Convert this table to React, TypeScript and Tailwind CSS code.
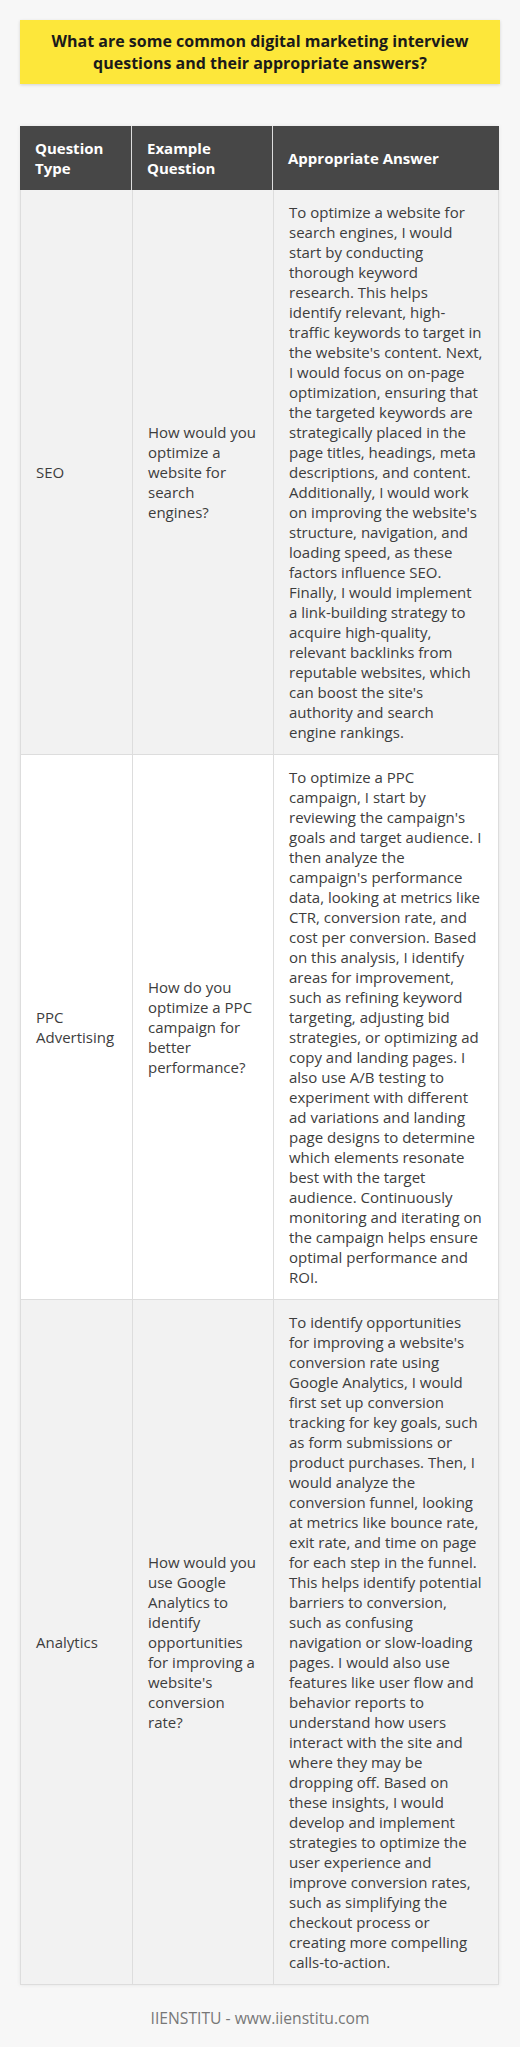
import React from "react";

type Row = { type: string[]; q: string[]; a: string[]; bg: string };

const rows: Row[] = [
  {
    type: ["SEO"],
    q: ["How would you", "optimize a", "website for", "search", "engines?"],
    a: [
      "To optimize a website for",
      "search engines, I would",
      "start by conducting",
      "thorough keyword",
      "research. This helps",
      "identify relevant, high-",
      "traffic keywords to target in",
      "the website's content. Next,",
      "I would focus on on-page",
      "optimization, ensuring that",
      "the targeted keywords are",
      "strategically placed in the",
      "page titles, headings, meta",
      "descriptions, and content.",
      "Additionally, I would work",
      "on improving the website's",
      "structure, navigation, and",
      "loading speed, as these",
      "factors influence SEO.",
      "Finally, I would implement",
      "a link-building strategy to",
      "acquire high-quality,",
      "relevant backlinks from",
      "reputable websites, which",
      "can boost the site's",
      "authority and search",
      "engine rankings.",
    ],
    bg: "bg-[#f2f2f2]",
  },
  {
    type: ["PPC", "Advertising"],
    q: ["How do you", "optimize a PPC", "campaign for", "better", "performance?"],
    a: [
      "To optimize a PPC",
      "campaign, I start by",
      "reviewing the campaign's",
      "goals and target audience. I",
      "then analyze the",
      "campaign's performance",
      "data, looking at metrics like",
      "CTR, conversion rate, and",
      "cost per conversion. Based",
      "on this analysis, I identify",
      "areas for improvement,",
      "such as refining keyword",
      "targeting, adjusting bid",
      "strategies, or optimizing ad",
      "copy and landing pages. I",
      "also use A/B testing to",
      "experiment with different",
      "ad variations and landing",
      "page designs to determine",
      "which elements resonate",
      "best with the target",
      "audience. Continuously",
      "monitoring and iterating on",
      "the campaign helps ensure",
      "optimal performance and",
      "ROI.",
    ],
    bg: "bg-white",
  },
  {
    type: ["Analytics"],
    q: [
      "How would you",
      "use Google",
      "Analytics to",
      "identify",
      "opportunities",
      "for improving a",
      "website's",
      "conversion",
      "rate?",
    ],
    a: [
      "To identify opportunities",
      "for improving a website's",
      "conversion rate using",
      "Google Analytics, I would",
      "first set up conversion",
      "tracking for key goals, such",
      "as form submissions or",
      "product purchases. Then, I",
      "would analyze the",
      "conversion funnel, looking",
      "at metrics like bounce rate,",
      "exit rate, and time on page",
      "for each step in the funnel.",
      "This helps identify potential",
      "barriers to conversion,",
      "such as confusing",
      "navigation or slow-loading",
      "pages. I would also use",
      "features like user flow and",
      "behavior reports to",
      "understand how users",
      "interact with the site and",
      "where they may be",
      "dropping off. Based on",
      "these insights, I would",
      "develop and implement",
      "strategies to optimize the",
      "user experience and",
      "improve conversion rates,",
      "such as simplifying the",
      "checkout process or",
      "creating more compelling",
      "calls-to-action.",
    ],
    bg: "bg-[#f2f2f2]",
  },
];

function Lines({ lines }: { lines: string[] }) {
  return (
    <div>
      {lines.map((l, i) => (
        <span key={i} className="block whitespace-nowrap">
          {l}
        </span>
      ))}
    </div>
  );
}

export default function App() {
  return (
    <div
      className="min-h-[2047px] w-[520px] bg-[#f7f7f7] px-[20px] pt-[20px]"
      style={{ fontFamily: '"Open Sans", "Noto Sans", sans-serif' }}
    >
      <div className="bg-[#fde73a] px-4 py-[10px] text-center text-[16px] font-bold leading-[22px] text-[#1a1a1a] shadow-[0_1px_3px_rgba(0,0,0,0.15)]">
        What are some common digital marketing interview questions and their appropriate answers?
      </div>
      <div className="mt-[42px] w-[479px] text-[15px] leading-[20px] text-[#3d3d3d] shadow-[0_0_4px_rgba(0,0,0,0.08)]">
        <div className="grid grid-cols-[111px_141px_227px] bg-[#474747] font-bold text-white">
          <div className="flex items-center px-[15px] py-[12px]">
            <Lines lines={["Question", "Type"]} />
          </div>
          <div className="flex items-center border-l border-[#dddddd] px-[15px] py-[12px]">
            <Lines lines={["Example", "Question"]} />
          </div>
          <div className="flex items-center border-l border-[#dddddd] px-[15px] py-[12px]">
            <Lines lines={["Appropriate Answer"]} />
          </div>
        </div>
        {rows.map((r) => (
          <div
            key={r.type.join(" ")}
            className={`grid grid-cols-[111px_141px_227px] border-x border-b border-[#dddddd] ${r.bg}`}
          >
            <div className="flex items-center px-[15px] py-[12px]">
              <Lines lines={r.type} />
            </div>
            <div className="flex items-center border-l border-[#dddddd] px-[15px] py-[12px]">
              <Lines lines={r.q} />
            </div>
            <div className="flex items-center border-l border-[#dddddd] px-[15px] py-[12px]">
              <Lines lines={r.a} />
            </div>
          </div>
        ))}
      </div>
      <div className="mt-[22px] text-center text-[15.7px] leading-[22px] text-[#777]">
        IIENSTITU - www.iienstitu.com
      </div>
    </div>
  );
}
